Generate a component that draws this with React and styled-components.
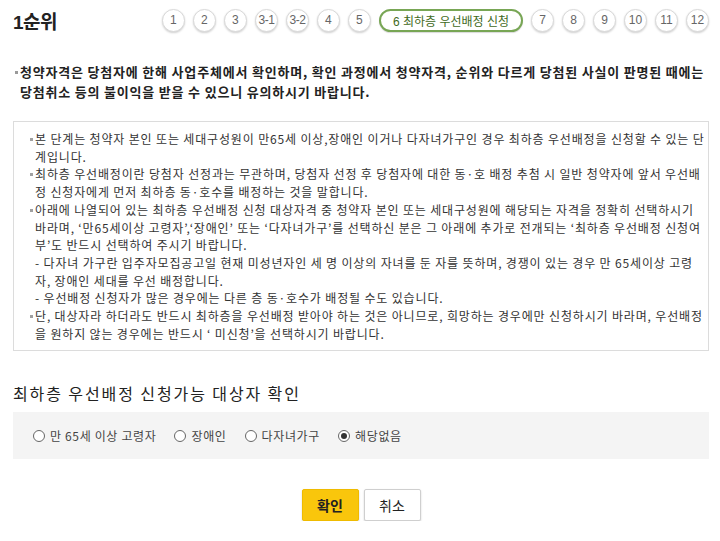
import React from "react";
import styled, { createGlobalStyle } from "styled-components";

const Global = createGlobalStyle`
  html, body { margin: 0; padding: 0; background: #fff; }
  body { font-family: "Noto Sans CJK KR", "Liberation Sans", sans-serif; color: #333; }
  * { box-sizing: border-box; }
`;

const Page = styled.div`
  width: 720px;
  padding: 0 11px 0 13px;
`;

const Header = styled.div`
  display: flex;
  align-items: center;
  height: 40px;
`;

const Title = styled.h1`
  margin: 0;
  font-family: "Liberation Sans", "Noto Sans CJK KR", sans-serif;
  font-size: 19px;
  font-weight: bold;
  color: #222;
  letter-spacing: -0.5px;
`;

const Steps = styled.ol`
  list-style: none;
  margin: 0 0 0 auto;
  padding: 0;
  display: flex;
  align-items: center;
  gap: 8px;
`;

const Step = styled.li`
  height: 23px;
  min-width: 23px;
  padding: ${(p) => (p.$active ? "0 12px" : p.$wide ? "0 2px" : "0")};
  border-radius: 12px;
  border: ${(p) => (p.$active ? "2px solid #78a655" : "1px solid #d9d9d9")};
  box-shadow: ${(p) => (p.$active ? "0 1px 1px rgba(0,0,0,0.15)" : "0 1px 2px rgba(0,0,0,0.18)")};
  background: #fff;
  display: flex;
  align-items: center;
  justify-content: center;
  font-family: "Liberation Sans", "Noto Sans CJK KR", sans-serif;
  font-size: 12px;
  color: ${(p) => (p.$active ? "#3f6a22" : "#666")};
  white-space: nowrap;
  letter-spacing: ${(p) => (p.$wide ? "-0.5px" : "0")};
`;

const Notice = styled.p`
  margin: 22px 0 0;
  position: relative;
  padding-left: 7px;
  font-size: 13px;
  font-weight: bold;
  line-height: 20px;
  color: #222;
  letter-spacing: 0.8px;
  white-space: nowrap;
  &::before {
    content: "";
    position: absolute;
    left: 2px;
    top: 9px;
    width: 3px;
    height: 3px;
    background: #9a9a9a;
  }
`;

const InfoBox = styled.div`
  margin-top: 19px;
  border: 1px solid #dcdcdc;
  padding: 8px 8px 8px 21px;
`;

const Item = styled.p`
  margin: 0;
  position: relative;
  font-size: 12px;
  line-height: 17.7px;
  color: #333;
  white-space: nowrap;
  letter-spacing: 0.84px;
  &::before {
    content: "";
    position: absolute;
    left: -5px;
    top: 8px;
    width: 3px;
    height: 3px;
    background: #a0a0a0;
  }
`;

const SubLine = styled.p`
  margin: 0;
  font-size: 12px;
  line-height: 17.7px;
  color: #333;
  white-space: nowrap;
  letter-spacing: 0.84px;
`;

const SectionTitle = styled.h2`
  margin: 32px 0 0;
  font-size: 16px;
  font-weight: normal;
  line-height: 20px;
  color: #222;
  letter-spacing: 1.9px;
`;

const RadioBox = styled.div`
  margin-top: 9px;
  height: 47px;
  background: #f4f4f4;
  display: flex;
  align-items: center;
  padding-left: 20px;
  gap: 18px;
`;

const RadioLabel = styled.label`
  display: flex;
  align-items: center;
  gap: 5px;
  font-size: 12px;
  color: #444;
  letter-spacing: 0.65px;
`;

const Radio = styled.input.attrs({ type: "radio" })`
  appearance: none;
  margin: 0;
  width: 12px;
  height: 12px;
  border: 1px solid #666;
  border-radius: 50%;
  background: #fff;
  display: grid;
  place-items: center;
  &:checked::after {
    content: "";
    width: 6px;
    height: 6px;
    border-radius: 50%;
    background: #333;
  }
`;

const Buttons = styled.div`
  margin-top: 30px;
  display: flex;
  justify-content: center;
  gap: 5px;
`;

const Button = styled.button`
  width: 57px;
  height: 32px;
  border-radius: 2px;
  font-family: inherit;
  font-size: 14px;
  font-weight: ${(p) => (p.$primary ? "bold" : "normal")};
  color: #222;
  cursor: pointer;
  background: ${(p) => (p.$primary ? "#f9c60c" : "#fff")};
  border: 1px solid ${(p) => (p.$primary ? "#efbb00" : "#cfcfcf")};
  box-shadow: 0 1px 2px rgba(0, 0, 0, 0.18);
`;

const steps = ["1", "2", "3", "3-1", "3-2", "4", "5", "6 최하층 우선배정 신청", "7", "8", "9", "10", "11", "12"];

export default function App() {
  return (
    <Page>
      <Global />
      <Header>
        <Title>1순위</Title>
        <Steps>
          {steps.map((s) => (
            <Step key={s} $active={s.startsWith("6")} $wide={s.includes("-")}>
              {s}
            </Step>
          ))}
        </Steps>
      </Header>

      <Notice>
        청약자격은 당첨자에 한해 사업주체에서 확인하며, 확인 과정에서 청약자격, 순위와 다르게 당첨된 사실이 판명된 때에는
        <br />
        당첨취소 등의 불이익을 받을 수 있으니 유의하시기 바랍니다.
      </Notice>

      <InfoBox>
        <Item>
          본 단계는 청약자 본인 또는 세대구성원이 만65세 이상,장애인 이거나 다자녀가구인 경우 최하층 우선배정을 신청할 수 있는 단
          <br />
          계입니다.
        </Item>
        <Item>
          최하층 우선배정이란 당첨자 선정과는 무관하며, 당첨자 선정 후 당첨자에 대한 동·호 배정 추첨 시 일반 청약자에 앞서 우선배
          <br />
          정 신청자에게 먼저 최하층 동·호수를 배정하는 것을 말합니다.
        </Item>
        <Item>
          아래에 나열되어 있는 최하층 우선배정 신청 대상자격 중 청약자 본인 또는 세대구성원에 해당되는 자격을 정확히 선택하시기
          <br />
          바라며, ‘만65세이상 고령자’,‘장애인’ 또는 ‘다자녀가구’를 선택하신 분은 그 아래에 추가로 전개되는 ‘최하층 우선배정 신청여
          <br />
          부’도 반드시 선택하여 주시기 바랍니다.
        </Item>
        <SubLine>
          - 다자녀 가구란 입주자모집공고일 현재 미성년자인 세 명 이상의 자녀를 둔 자를 뜻하며, 경쟁이 있는 경우 만 65세이상 고령
          <br />
          자, 장애인 세대를 우선 배정합니다.
        </SubLine>
        <SubLine>- 우선배정 신청자가 많은 경우에는 다른 층 동·호수가 배정될 수도 있습니다.</SubLine>
        <Item>
          단, 대상자라 하더라도 반드시 최하층을 우선배정 받아야 하는 것은 아니므로, 희망하는 경우에만 신청하시기 바라며, 우선배정
          <br />
          을 원하지 않는 경우에는 반드시 ‘ 미신청’을 선택하시기 바랍니다.
        </Item>
      </InfoBox>

      <SectionTitle>최하층 우선배정 신청가능 대상자 확인</SectionTitle>
      <RadioBox>
        <RadioLabel>
          <Radio name="target" />만 65세 이상 고령자
        </RadioLabel>
        <RadioLabel>
          <Radio name="target" />장애인
        </RadioLabel>
        <RadioLabel>
          <Radio name="target" />다자녀가구
        </RadioLabel>
        <RadioLabel>
          <Radio name="target" defaultChecked />해당없음
        </RadioLabel>
      </RadioBox>

      <Buttons>
        <Button $primary>확인</Button>
        <Button>취소</Button>
      </Buttons>
    </Page>
  );
}
